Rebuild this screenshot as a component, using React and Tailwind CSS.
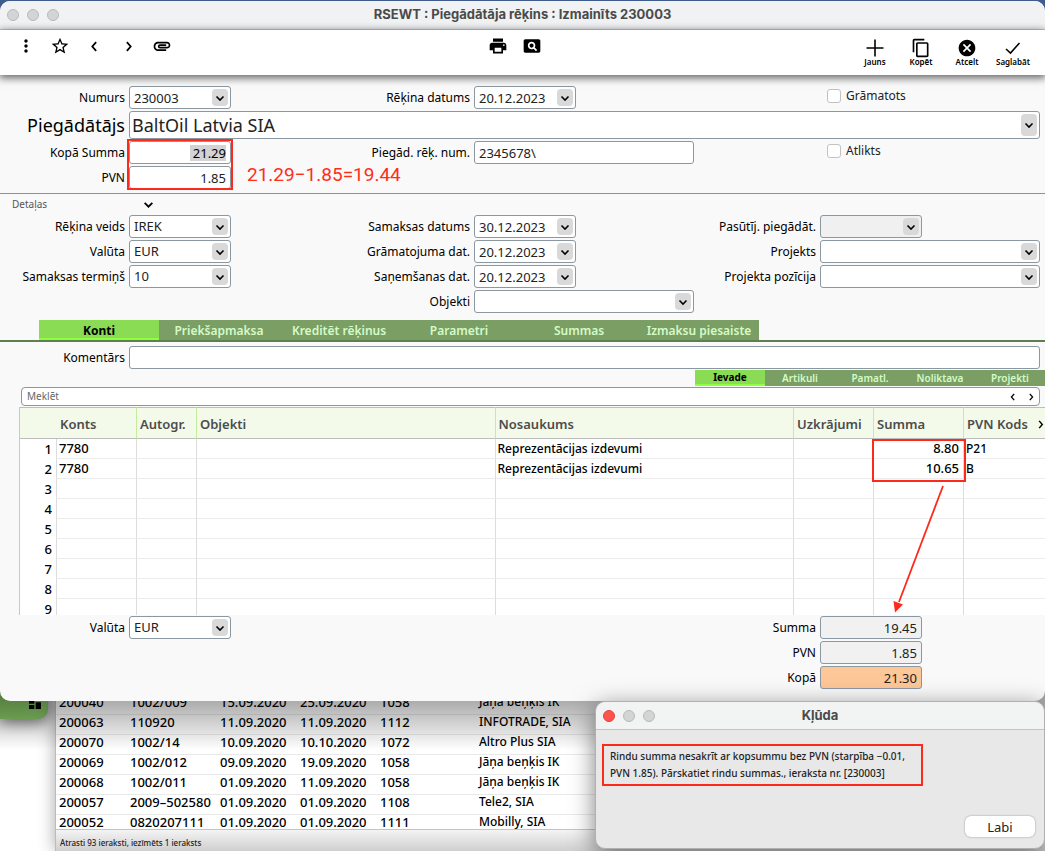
import React from 'react';
import { MdAttachment, MdCancel, MdContentCopy, MdDashboard, MdMoreVert, MdPageview, MdPrint, MdStarBorder } from 'react-icons/md';

const tabs = ['Konti', 'Priekšapmaksa', 'Kreditēt rēķinus', 'Parametri', 'Summas', 'Izmaksu piesaiste'];
const subTabs = ['Ievade', 'Artikuli', 'Pamatl.', 'Noliktava', 'Projekti'];

const rows = [
  { konts: '7780', nosaukums: 'Reprezentācijas izdevumi', summa: '8.80', kods: 'P21' },
  { konts: '7780', nosaukums: 'Reprezentācijas izdevumi', summa: '10.65', kods: 'B' },
  {}, {}, {}, {}, {}, {}, {},
];

const invoices = [
  ['200040', '1002/009', '15.09.2020', '25.09.2020', '1058', 'Jāņa beņķis IK'],
  ['200063', '110920', '11.09.2020', '11.09.2020', '1112', 'INFOTRADE, SIA'],
  ['200070', '1002/14', '10.09.2020', '10.10.2020', '1072', 'Altro Plus SIA'],
  ['200069', '1002/012', '09.09.2020', '19.09.2020', '1058', 'Jāņa beņķis IK'],
  ['200068', '1002/011', '01.09.2020', '11.09.2020', '1058', 'Jāņa beņķis IK'],
  ['200057', '2009–502580', '01.09.2020', '01.09.2020', '1108', 'Tele2, SIA'],
  ['200052', '0820207111', '01.09.2020', '01.09.2020', '1111', 'Mobilly, SIA'],
];

function Chevron({ dir = 'down', className = '' }) {
  const paths = {
    down: 'M1.5 3.5 L5 7 L8.5 3.5',
    left: 'M6.5 1 L3 5 L6.5 9',
    right: 'M3.5 1 L7 5 L3.5 9',
  };
  return (
    <svg viewBox="0 0 10 10" className={className} fill="none" stroke="currentColor" strokeWidth="1.6" aria-hidden="true">
      <path d={paths[dir]} />
    </svg>
  );
}

function Lights({ active }) {
  return (
    <div className="flex gap-2">
      <span className={`size-3 rounded-full border ${active ? 'bg-[#ff544d] border-[#e0443e]' : 'bg-[#d3d4d5] border-[#b9babb]'}`} />
      <span className="size-3 rounded-full border bg-[#d3d4d5] border-[#b9babb]" />
      <span className="size-3 rounded-full border bg-[#d3d4d5] border-[#b9babb]" />
    </div>
  );
}

function Field({ id, label, value = '', kind = 'lookup', width = 'w-[102px]', className = '', bg = 'bg-white', align = '', readOnly }) {
  const box = `block h-[23px] w-full rounded-[3px] border border-[#8b97a1] px-1 text-[13px] text-[#222] outline-none ${bg} ${align}`;
  return (
    <div className={`flex items-center justify-end gap-1 ${className}`}>
      <label htmlFor={id} className="whitespace-nowrap text-[12px] leading-5">{label}</label>
      <div className="w-[220px] shrink-0">
        <div className={`relative ${width}`}>
          {kind === 'select' ? (
            <select id={id} className={`${box} appearance-none`}>
              <option>{value}</option>
            </select>
          ) : (
            <input id={id} type="text" defaultValue={value} readOnly={readOnly} className={box} />
          )}
          {kind === 'select' && (
            <span className="pointer-events-none absolute right-[3px] top-[3px] flex h-[17px] w-4 items-center justify-center rounded bg-[#d9d9d9]">
              <Chevron className="size-[10px]" />
            </span>
          )}
          {kind === 'lookup' && (
            <button type="button" aria-label={label} className="absolute right-[3px] top-[3px] flex h-[17px] w-4 items-center justify-center rounded bg-[#d9d9d9]">
              <Chevron className="size-[10px]" />
            </button>
          )}
        </div>
      </div>
    </div>
  );
}

/* left column fields share the 102px box, so drop the wide slot there */
function LeftField(props) {
  return (
    <div className="w-[231px] overflow-visible">
      <Field {...props} className="w-[349px]" />
    </div>
  );
}

function Check({ id, label }) {
  return (
    <div className="flex items-center gap-[5px] pb-[3px] pl-[133px]">
      <input id={id} type="checkbox" className="size-[14px] appearance-none rounded-[3px] border border-[#c2c2c2] bg-white" />
      <label htmlFor={id} className="text-[12px] leading-5 text-[#222]">{label}</label>
    </div>
  );
}

function IconButton({ label, children }) {
  return (
    <button type="button" aria-label={label} className="flex size-5 items-center justify-center">
      {children}
    </button>
  );
}

function Action({ label, children }) {
  return (
    <button type="button" className="flex w-[34px] flex-col items-center text-[8px] font-semibold leading-[10px]">
      <span className="flex h-[18px] items-center justify-center">{children}</span>
      {label}
    </button>
  );
}

function Toolbar() {
  return (
    <div className="relative z-10 grid h-[45px] grid-cols-[1fr_auto_1fr] items-start bg-white pr-[15px] shadow-[0_2px_8px_1px_rgba(0,0,0,0.6)]">
      <div className="flex items-center gap-[14px] pl-4 pt-[6px]">
        <IconButton label="Menu"><MdMoreVert className="size-5" /></IconButton>
        <IconButton label="Favorite"><MdStarBorder className="size-5" /></IconButton>
        <IconButton label="Previous"><Chevron dir="left" className="size-[11px]" /></IconButton>
        <IconButton label="Next"><Chevron dir="right" className="size-[11px]" /></IconButton>
        <IconButton label="Attachments"><MdAttachment className="size-5" /></IconButton>
      </div>
      <div className="flex gap-[14px] pt-[6px]">
        <IconButton label="Print"><MdPrint className="size-5" /></IconButton>
        <IconButton label="Preview"><MdPageview className="size-5" /></IconButton>
      </div>
      <div className="flex justify-end gap-3 pt-[9px]">
        <Action label="Jauns">
          <svg viewBox="0 0 18 18" className="size-[18px]" stroke="currentColor" strokeWidth="1.6"><path d="M9 0.5 V17.5 M0.5 9 H17.5" /></svg>
        </Action>
        <Action label="Kopēt"><MdContentCopy className="size-5" /></Action>
        <Action label="Atcelt"><MdCancel className="size-5" /></Action>
        <Action label="Saglabāt">
          <svg viewBox="0 0 16 14" className="h-[14px] w-4" fill="none" stroke="currentColor" strokeWidth="1.6"><path d="M1 8 L5.5 12 L14.5 2" /></svg>
        </Action>
      </div>
    </div>
  );
}

function Header() {
  return (
    <section className="relative flex flex-col gap-[2px] border-b border-[#8e9296] pb-1 pr-[5px] pt-[11px]">
      <div className="grid grid-cols-[231px_1fr_346px] items-center">
        <LeftField id="numurs" label="Numurs" value="230003" />
        <Field id="datums" label="Rēķina datums" value="20.12.2023" />
        <Check id="gramatots" label="Grāmatots" />
      </div>
      <div className="flex items-center gap-1">
        <label htmlFor="piegadatajs" className="w-[125px] text-right text-[18px] leading-7">Piegādātājs</label>
        <div className="relative flex-1">
          <input id="piegadatajs" defaultValue="BaltOil Latvia SIA" className="block h-7 w-full rounded-[3px] border border-[#8b97a1] bg-white px-[2px] text-[18px] text-[#222] outline-none" />
          <button type="button" aria-label="Piegādātājs" className="absolute right-[3px] top-[3px] flex h-[22px] w-4 items-center justify-center rounded bg-[#d9d9d9]">
            <Chevron className="size-[10px]" />
          </button>
        </div>
      </div>
      <div className="grid grid-cols-[231px_1fr_346px] items-center">
        <div className="flex items-center justify-end gap-1">
          <label htmlFor="kopa-summa" className="text-[12px] leading-5">Kopā Summa</label>
          <div className="relative h-[23px] w-[102px] rounded-[3px] border border-[#8b97a1] bg-white">
            <span className="absolute right-1 top-[3px] h-4 w-9 bg-[#d3d3d3]" />
            <input id="kopa-summa" defaultValue="21.29" className="relative block h-[21px] w-full bg-transparent px-1 text-right text-[13px] outline-none" />
          </div>
        </div>
        <Field id="rek-num" label="Piegād. rēķ. num." value="2345678\" kind="text" width="w-full" />
        <Check id="atlikts" label="Atlikts" />
      </div>
      <div className="flex items-start">
        <LeftField id="pvn" label="PVN" value="1.85" kind="text" align="text-right" />
        <p className="relative pl-4 font-[Roboto,sans-serif] text-[19px] leading-[18px] text-[#ff2d1a]">21.29−1.85=19.44</p>
      </div>
      <div className="pointer-events-none absolute bottom-[3px] left-[127px] h-[51px] w-[106px] border-2 border-[#fb2a1c]" />
    </section>
  );
}

function Details() {
  return (
    <section className="pr-[5px]">
      <button type="button" className="flex h-[21px] w-[154px] items-center justify-between pl-3 text-[10px] text-[#555]">
        Detaļas
        <Chevron className="size-[11px] text-black" />
      </button>
      <div className="grid grid-cols-[231px_1fr_346px] gap-y-[2px]">
        <LeftField id="veids" label="Rēķina veids" value="IREK" kind="select" />
        <Field id="samaksas-datums" label="Samaksas datums" value="30.12.2023" />
        <Field id="pasutij" label="Pasūtīj. piegādāt." bg="bg-[#f0f0f0]" readOnly />
        <LeftField id="valuta" label="Valūta" value="EUR" kind="select" />
        <Field id="gramatojuma" label="Grāmatojuma dat." value="20.12.2023" />
        <Field id="projekts" label="Projekts" width="w-full" />
        <LeftField id="termins" label="Samaksas termiņš" value="10" kind="select" />
        <Field id="sanemsanas" label="Saņemšanas dat." value="20.12.2023" />
        <Field id="pozicija" label="Projekta pozīcija" width="w-full" />
        <Field id="objekti" label="Objekti" width="w-full" className="col-start-2" />
      </div>
    </section>
  );
}

function AccountTable() {
  const th = 'border-l border-[#c3ec9b] pl-[3px] text-left font-semibold';
  const td = 'border-b border-l border-b-[#ececec] border-l-[#dcdcdc] px-[2px]';
  return (
    <div className="relative ml-[19px] mt-px">
      <div className="h-[208px] overflow-hidden border-l border-[#c8c8c8]">
        <table className="w-full table-fixed border-separate border-spacing-0 bg-white text-[12px] font-medium">
          <colgroup>
            <col className="w-[36px]" />
            <col className="w-[80px]" />
            <col className="w-[60px]" />
            <col />
            <col />
            <col className="w-[80px]" />
            <col className="w-[90px]" />
            <col className="w-[82px]" />
          </colgroup>
          <thead>
            <tr className="h-8 bg-[#f3faea] text-[13px] text-[#4c4c4c] [&>th]:border-y [&>th]:border-y-[#bdbdbd] [&>th]:pt-[3px]">
              <th aria-label="Nr." />
              <th className="pl-1 text-left font-semibold">Konts</th>
              <th className={th}>Autogr.</th>
              <th className={th}>Objekti</th>
              <th className={th}>Nosaukums</th>
              <th className={th}>Uzkrājumi</th>
              <th className={th}>Summa</th>
              <th className={th}>
                <span className="flex items-center justify-between whitespace-nowrap">
                  PVN Kods
                  <Chevron dir="right" className="size-[9px] text-black" />
                </span>
              </th>
            </tr>
          </thead>
          <tbody>
            {rows.map((row, i) => (
              <tr key={i} className="h-5 leading-[19px]">
                <td className="pr-1 text-right text-[13px]">{i + 1}</td>
                <td className={`${td} text-[13px]`}>{row.konts}</td>
                <td className={td} />
                <td className={td} />
                <td className={td}>{row.nosaukums}</td>
                <td className={td} />
                <td className="border-b border-l border-b-[#ececec] border-l-[#dcdcdc] pr-1 text-right text-[13px]">{row.summa}</td>
                <td className={td}>{row.kods}</td>
              </tr>
            ))}
          </tbody>
        </table>
      </div>
      <div className="pointer-events-none absolute right-[79px] top-8 h-[43px] w-[94px] border-2 border-[#fb2a1c]" />
      <svg viewBox="0 0 56 130" className="pointer-events-none absolute right-[99px] top-[78px] z-10 h-[130px] w-14" aria-hidden="true">
        <path d="M53 1 L9 117" stroke="#fb2a1c" strokeWidth="1.8" />
        <path d="M5 127.500 L3.500 116 L13 119.500 Z" fill="#fb2a1c" />
      </svg>
    </div>
  );
}

function InvoiceWindow() {
  return (
    <main className="relative z-10 mt-px overflow-hidden rounded-[10px] bg-[#f9f9f9] pb-3">
      <header className="grid h-[29px] grid-cols-[1fr_auto_1fr] items-center border-b border-[#d0d0d0] bg-[#f1f2f4] px-[7px]">
        <Lights />
        <h1 className="font-[Inter,sans-serif] text-[13px] font-bold text-[#4a4a4a]">RSEWT : Piegādātāja rēķins : Izmainīts 230003</h1>
      </header>
      <Toolbar />
      <Header />
      <Details />
      <nav className="mt-[7px] flex border-b-2 border-[#5f7f4f] pl-[39px]">
        {tabs.map((tab, i) => (
          <button key={tab} type="button" className={`h-5 w-[120px] whitespace-nowrap pt-[2px] text-[12px] leading-[18px] ${i === 0 ? 'border-b-2 border-[#8dff3c] bg-[#8bdc55] font-bold' : 'bg-[#7a9e64] font-semibold text-[#d4fbc8]'}`}>
            {tab}
          </button>
        ))}
      </nav>
      <div className="mt-1 flex items-center gap-1 pr-[5px]">
        <label htmlFor="komentars" className="w-[125px] text-right text-[12px] leading-5">Komentārs</label>
        <input id="komentars" type="text" className="h-[23px] flex-1 rounded-[3px] border border-[#8b97a1] bg-white px-1 text-[13px]" />
      </div>
      <nav className="mt-px flex justify-end">
        {subTabs.map((tab, i) => (
          <button key={tab} type="button" className={`h-4 w-[70px] text-[10px] leading-[14px] ${i === 0 ? 'border-b-2 border-[#8dff3c] bg-[#8bdc55] font-bold' : 'bg-[#7a9e64] font-semibold text-[#d4fbc8]'}`}>
            {tab}
          </button>
        ))}
      </nav>
      <div className="ml-[21px] mr-[5px] mt-px flex h-[19px] items-center rounded-sm border border-[#8b97a1] bg-white pl-[5px] pr-1">
        <input type="text" aria-label="Meklēt" placeholder="Meklēt" className="flex-1 text-[10px] outline-none placeholder:text-[#666]" />
        <button type="button" aria-label="Previous result" className="mr-[10px]"><Chevron dir="left" className="size-2" /></button>
        <button type="button" aria-label="Next result"><Chevron dir="right" className="size-2" /></button>
      </div>
      <AccountTable />
      <div className="mt-px grid grid-cols-[231px_1fr] pr-[5px]">
        <LeftField id="valuta-kopa" label="Valūta" value="EUR" kind="select" />
        <div className="flex flex-col gap-[2px]">
          <Field id="t-summa" label="Summa" value="19.45" kind="text" bg="bg-[#f1f1f1]" align="text-right" readOnly />
          <Field id="t-pvn" label="PVN" value="1.85" kind="text" bg="bg-[#f1f1f1]" align="text-right" readOnly />
          <Field id="t-kopa" label="Kopā" value="21.30" kind="text" bg="bg-[#fdc797]" align="text-right" readOnly />
        </div>
      </div>
    </main>
  );
}

function ListWindow() {
  return (
    <section className="absolute bottom-0 left-[55px] right-0 border-l border-[#bbb] bg-white shadow-[0_0_16px_rgba(0,0,0,0.35)]">
      <div className="border-b border-[#c4c4c4]">
        <table className="w-full table-fixed text-[13px] font-medium">
          <colgroup>
            <col className="w-[71px]" />
            <col className="w-[90px]" />
            <col className="w-[80px]" />
            <col className="w-[80px]" />
            <col className="w-[99px]" />
            <col />
          </colgroup>
          <tbody>
            {invoices.map((inv) => (
              <tr key={inv[0]} className="h-5 border-b border-[#e9e9e9] align-top leading-[14px] last:h-[14px] last:border-b-0">
                {inv.map((cell, i) => (
                  <td key={i} className="whitespace-nowrap pl-[3px] last:text-[12px]">{cell}</td>
                ))}
              </tr>
            ))}
          </tbody>
        </table>
      </div>
      <p className="h-[21px] bg-linear-to-b from-[#f4f4f4] to-[#cfcfcf] pl-1 pt-[3px] text-[8px] font-medium leading-5 text-[#222]">
        Atrasti 93 ieraksti, iezīmēts 1 ieraksts
      </p>
    </section>
  );
}

function ErrorDialog() {
  return (
    <div role="alertdialog" aria-labelledby="kluda" className="absolute bottom-[2px] right-0 z-20 flex h-[148px] w-[450px] flex-col rounded-[10px] border border-[#b0b0b0] bg-[#e8e8e8] shadow-[0_6px_24px_rgba(0,0,0,0.5)]">
      <header className="grid h-7 grid-cols-[1fr_auto_1fr] items-center rounded-t-[10px] border-b border-[#c4c4c4] bg-[#f1f4f3] px-[7px]">
        <Lights active />
        <h2 id="kluda" className="font-[Inter,sans-serif] text-[13px] font-bold text-[#4a4a4a]">Kļūda</h2>
      </header>
      <p className="ml-[6px] mt-[14px] w-[321px] whitespace-nowrap border-2 border-[#fb2a1c] px-[6px] py-[2px] text-[10px] font-medium leading-[17px] text-[#222]">
        Rindu summa nesakrīt ar kopsummu bez PVN (starpība −0.01,<br />
        PVN 1.85). Pārskatiet rindu summas., ieraksta nr. [230003]
      </p>
      <button type="button" className="mb-[11px] ml-auto mr-[9px] mt-auto h-[21px] w-[70px] rounded-md bg-white text-[13px] leading-5 text-[#222] shadow-[0_0_2px_rgba(0,0,0,0.4)]">
        Labi
      </button>
    </div>
  );
}

export default function App() {
  return (
    <div className="relative min-h-screen overflow-hidden bg-linear-to-b from-[#3f5c8c] from-[12px] to-white to-[13px] font-['Noto_Sans',sans-serif] text-black">
      <div className="absolute left-0 top-[640px] flex h-[79px] w-12 items-end justify-end rounded-br-[10px] bg-[#86c465] pb-2 pr-[5px] shadow-[0_4px_14px_rgba(0,0,0,0.5)]">
        <MdDashboard className="size-4" />
      </div>
      <ListWindow />
      <div className="pointer-events-none absolute inset-x-0 top-[690px] h-[60px] bg-linear-to-b from-black/40 to-transparent" />
      <InvoiceWindow />
      <ErrorDialog />
    </div>
  );
}
